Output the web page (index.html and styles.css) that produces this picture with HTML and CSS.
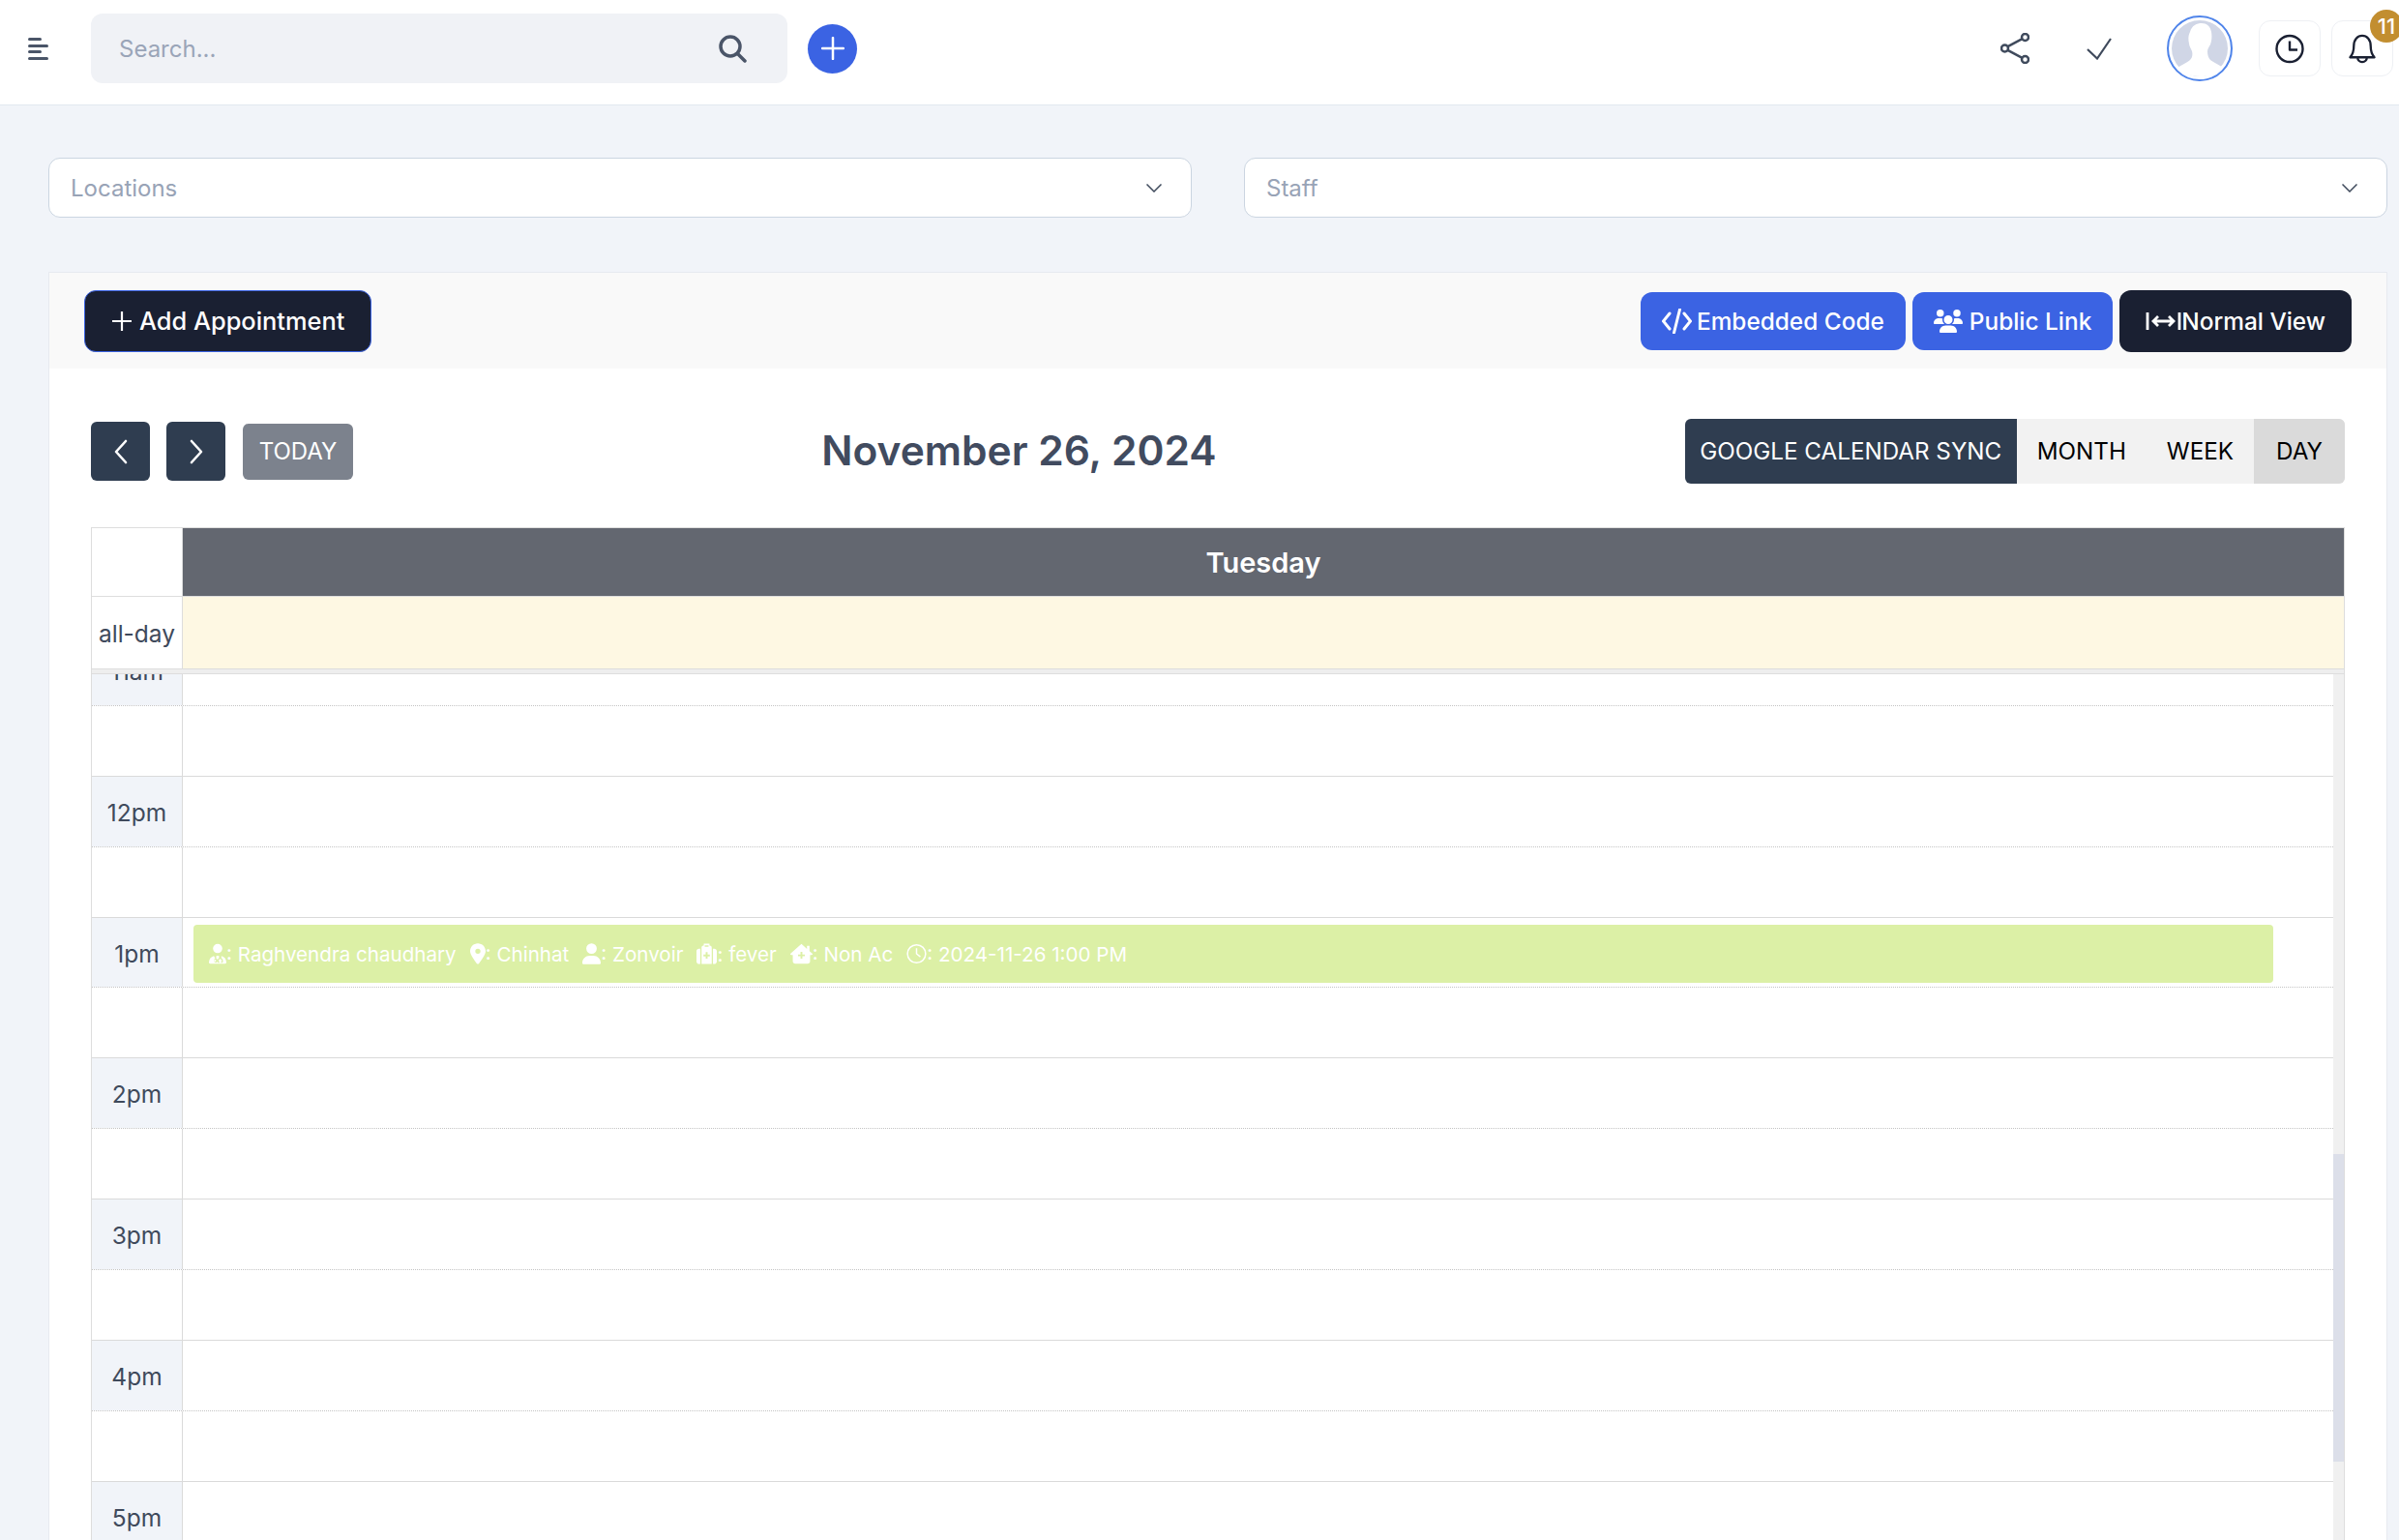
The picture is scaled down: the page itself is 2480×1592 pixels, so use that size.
FILE: index.html
```html
<!DOCTYPE html>
<html lang="en">
<head>
<meta charset="utf-8">
<title>Appointments</title>
<link rel="stylesheet" href="styles.css">
</head>
<body>
<div class="page">
  <header class="topbar">
    <svg class="menu-icon" viewBox="0 0 21 23"><path d="M1.5 1.5h11M1.5 8.5h18M1.5 14.5h11M1.5 21.5h18"/></svg>
    <div class="search">
      <span class="search-text">Search...</span>
      <svg class="search-icon" viewBox="0 0 29 29"><circle cx="12" cy="12" r="10"/><path d="M19.5 19.5l7.5 7.5"/></svg>
    </div>
    <button class="add-circle"><svg viewBox="0 0 24 24"><path d="M12 1v22M1 12h22"/></svg></button>
    <div class="top-right">
      <svg class="share-icon" viewBox="0 0 30 32"><circle cx="4.5" cy="16" r="3.5"/><circle cx="25.5" cy="4.5" r="3.5"/><circle cx="25.5" cy="27.5" r="3.5"/><path d="M7.5 14.2l15-8M7.5 17.8l15 8"/></svg>
      <svg class="check-icon" viewBox="0 0 26 23"><path d="M1 12l10 9.500L25 1"/></svg>
      <div class="avatar">
        <svg viewBox="0 0 58 58"><circle class="avatar-bg" cx="29" cy="29" r="29"/><path class="avatar-person" d="M19 12C21 5 26 3 31 3c5 0 9 3 10 9 1 6 0 10-1 13-1 2-3 4-3 7 0 4 1 7 3 9 4 3 9 5 13 8-6 6-15 9-24 9S11 54 6 49c4-3 10-5 13-8 2-2 3-5 2-9-1-3-3-5-3-8-1-4-1-8 1-12z"/></svg>
      </div>
      <div class="icon-box">
        <svg class="box-icon" viewBox="0 0 30 30"><circle cx="15" cy="15" r="13.500"/><path d="M15 7v9h8"/></svg>
      </div>
      <div class="icon-box">
        <svg class="box-icon" viewBox="0 0 30 32"><path d="M2 25c3-3 4-6 4-12C6 6 10 2 15 2s9 4 9 11c0 6 1 9 4 12zM10 25a5 5 0 0 0 10 0"/></svg>
        <span class="badge">11</span>
      </div>
    </div>
  </header>

  <main class="main">
    <div class="filters">
      <div class="select"><span>Locations</span><svg viewBox="0 0 16 9"><path d="M.5.5L8 8l7.500-7.500"/></svg></div>
      <div class="select"><span>Staff</span><svg viewBox="0 0 16 9"><path d="M.5.5L8 8l7.500-7.500"/></svg></div>
    </div>

    <section class="card">
      <div class="card-head">
        <button class="btn btn-add"><svg class="plus" viewBox="0 0 20 20"><path d="M10 0v20M0 10h20"/></svg>Add Appointment</button>
        <div class="card-actions">
          <button class="btn btn-embed"><svg class="code-icon" viewBox="0 0 31 26"><path d="M8 5L1.500 13 8 21M23 5l6.500 8-6.500 8M18.500 1l-6 24"/></svg>Embedded Code</button>
          <button class="btn btn-public"><svg class="users-icon" viewBox="0 0 640 512"><path d="M144 0a80 80 0 1 1 0 160A80 80 0 1 1 144 0zM512 0a80 80 0 1 1 0 160A80 80 0 1 1 512 0zM0 298.700C0 239.800 47.800 192 106.700 192h42.700c15.900 0 31 3.500 44.600 9.700c-1.300 7.200-1.900 14.700-1.900 22.300c0 38.200 16.800 72.500 43.300 96c-.2 0-.4 0-.7 0H21.300C9.600 320 0 310.400 0 298.700zM405.300 320c-.2 0-.4 0-.7 0c26.600-23.500 43.300-57.800 43.300-96c0-7.600-.7-15-1.900-22.300c13.600-6.300 28.700-9.700 44.600-9.700h42.700C592.200 192 640 239.800 640 298.700c0 11.800-9.600 21.300-21.300 21.300H405.300zM224 224a96 96 0 1 1 192 0 96 96 0 1 1 -192 0zM128 485.300C128 411.700 187.700 352 261.300 352H378.700C452.300 352 512 411.700 512 485.300c0 14.700-11.900 26.700-26.700 26.700H154.700c-14.700 0-26.700-11.900-26.700-26.700z"/></svg>Public Link</button>
          <button class="btn btn-normal"><svg class="width-icon" viewBox="0 0 37 20"><path d="M2 1v18M35 1v18M8 10h21M13 5l-5 5 5 5M24 5l5 5-5 5"/></svg>Normal View</button>
        </div>
      </div>

      <div class="card-body">
        <div class="toolbar">
          <div class="nav-group">
            <button class="nav-btn"><svg viewBox="0 0 14 26"><path d="M12 2L2 13l10 11"/></svg></button>
            <button class="nav-btn"><svg viewBox="0 0 14 26"><path d="M2 2l10 11L2 24"/></svg></button>
            <button class="today-btn">TODAY</button>
          </div>
          <h1 class="cal-title">November 26, 2024</h1>
          <div class="segments">
            <button class="seg seg-sync">GOOGLE CALENDAR SYNC</button>
            <button class="seg">MONTH</button>
            <button class="seg">WEEK</button>
            <button class="seg seg-active">DAY</button>
          </div>
        </div>

        <div class="calendar">
          <div class="cal-row cal-row-head">
            <div class="gutter"></div>
            <div class="day-name">Tuesday</div>
          </div>
          <div class="cal-row cal-row-allday">
            <div class="gutter allday-label">all-day</div>
            <div class="allday-cell"></div>
          </div>
          <div class="divider"></div>
          <div class="scroller">
            <div class="slots">
              <div class="slot hour"><div class="label">11am</div><div class="lane"></div></div>
              <div class="slot half"><div class="label blank"></div><div class="lane"></div></div>
              <div class="slot hour"><div class="label">12pm</div><div class="lane"></div></div>
              <div class="slot half"><div class="label blank"></div><div class="lane"></div></div>
              <div class="slot hour"><div class="label">1pm</div>
                <div class="lane">
                  <div class="event">
                    <span class="ev-item"><svg class="ev-icon ev-doctor" viewBox="0 0 448 512"><path d="M224 240A120 120 0 1 0 224 0a120 120 0 1 0 0 240zM128 312C50 330 0 395 0 482c0 16 13 30 30 30h388c17 0 30-14 30-30 0-87-50-152-128-170v54c22 8 40 30 40 62v40c0 9-7 16-16 16h-32v-32h16v-24c0-20-18-36-38-36s-38 16-38 36v24h16v32h-32c-9 0-16-7-16-16v-40c0-32 18-54 40-62v-56c-10-1-22-2-36-2s-26 1-36 2v68c24 8 40 30 40 54 0 28-24 52-52 52s-52-24-52-52c0-24 16-46 40-54zM132 434a24 24 0 1 0 0-1z"/></svg>: Raghvendra chaudhary</span>
                    <span class="ev-item"><svg class="ev-icon ev-pin" viewBox="0 0 384 512"><path d="M215.700 499.200C267 435 384 279.400 384 192C384 86 298 0 192 0S0 86 0 192c0 87.400 117 243 168.300 307.200c12.300 15.300 35.100 15.300 47.400 0zM192 128a64 64 0 1 1 0 128 64 64 0 1 1 0-128z"/></svg>: Chinhat</span>
                    <span class="ev-item"><svg class="ev-icon ev-user" viewBox="0 0 448 512"><path d="M224 256A128 128 0 1 0 224 0a128 128 0 1 0 0 256zm-45.700 48C79.800 304 0 383.800 0 482.300C0 498.700 13.300 512 29.700 512H418.300c16.400 0 29.700-13.300 29.700-29.700C448 383.800 368.200 304 269.700 304H178.300z"/></svg>: Zonvoir</span>
                    <span class="ev-item"><svg class="ev-icon ev-case" viewBox="0 0 512 512"><path fill-rule="evenodd" d="M176 48c-26 0-48 22-48 48v416h256V96c0-26-22-48-48-48h-8V0h-144v48zM208 40h96v40h-96zM232 216h48v56h56v48h-56v56h-48v-56h-56v-48h56zM96 128v384H64c-35 0-64-29-64-64V192c0-35 29-64 64-64zM416 128h32c35 0 64 29 64 64v256c0 35-29 64-64 64h-32z"/></svg>: fever</span>
                    <span class="ev-item"><svg class="ev-icon ev-house" viewBox="0 0 576 512"><path fill-rule="evenodd" d="M288 0L0 256c-4 20 10 34 32 32h32v160c0 35 29 64 64 64h320c35 0 64-29 64-64V288h32c22 2 36-12 32-32l-80-72V48h-64v80zM264 208h48v64h64v48h-64v64h-48v-64h-64v-48h64z"/></svg>: Non Ac</span>
                    <span class="ev-item"><svg class="ev-icon ev-clock" viewBox="0 0 24 24"><circle cx="12" cy="12" r="10.700"/><path d="M12 5.500V12l4.500 3.500"/></svg>: 2024-11-26 1:00 PM</span>
                  </div>
                </div>
              </div>
              <div class="slot half"><div class="label blank"></div><div class="lane"></div></div>
              <div class="slot hour"><div class="label">2pm</div><div class="lane"></div></div>
              <div class="slot half"><div class="label blank"></div><div class="lane"></div></div>
              <div class="slot hour"><div class="label">3pm</div><div class="lane"></div></div>
              <div class="slot half"><div class="label blank"></div><div class="lane"></div></div>
              <div class="slot hour"><div class="label">4pm</div><div class="lane"></div></div>
              <div class="slot half"><div class="label blank"></div><div class="lane"></div></div>
              <div class="slot hour"><div class="label">5pm</div><div class="lane"></div></div>
              <div class="slot half"><div class="label blank"></div><div class="lane"></div></div>
            </div>
            <div class="scrollbar"><div class="thumb"></div></div>
          </div>
        </div>
      </div>
    </section>
  </main>
</div>
</body>
</html>
```

FILE: styles.css
```css
* { box-sizing: border-box; }
html, body { margin: 0; height: 100%; overflow: hidden; }
body { font-family: Inter, "Liberation Sans", sans-serif; background: #f1f4f9; color: #3f4a5c; }
button { font: inherit; border: 0; padding: 0; cursor: pointer; }
svg { display: block; flex: none; }

.page { height: 100vh; display: flex; flex-direction: column; }

/* Top bar */
.topbar { height: 109px; flex: none; display: flex; align-items: center; padding: 0 6px 8px 29px; background: #fff; border-bottom: 1px solid #e2e8f0; }
.menu-icon { width: 21px; height: 23px; margin-right: 44px; fill: none; stroke: #4a5568; stroke-width: 3; stroke-linecap: round; }
.search { width: 720px; height: 72px; display: flex; align-items: center; justify-content: space-between; padding: 0 42px 0 29px; background: #f0f2f6; border-radius: 12px; }
.search-text { font-size: 24px; color: #9aa5b8; }
.search-icon { width: 29px; height: 29px; fill: none; stroke: #4a5568; stroke-width: 3.500; stroke-linecap: round; }
.add-circle { width: 51px; height: 51px; margin-left: 21px; border-radius: 50%; background: #3b63e3; display: flex; align-items: center; justify-content: center; }
.add-circle svg { width: 24px; height: 24px; fill: none; stroke: #fff; stroke-width: 2.500; stroke-linecap: round; }
.top-right { margin-left: auto; display: flex; align-items: center; }
.share-icon { width: 30px; height: 32px; margin-right: 59px; fill: none; stroke: #3f4a5c; stroke-width: 2.500; }
.check-icon { width: 26px; height: 23px; margin-right: 57px; fill: none; stroke: #3f4a5c; stroke-width: 2.200; }
.avatar { width: 68px; height: 68px; margin-right: 27px; padding: 3px; border: 2px solid #4f84ea; border-radius: 50%; background: #fff; overflow: hidden; }
.avatar svg { width: 100%; height: 100%; }
.avatar-bg { fill: #d0d6e6; }
.avatar-person { fill: #fff; }
.icon-box { position: relative; width: 64px; height: 58px; display: flex; align-items: center; justify-content: center; border: 1px solid #eef0f4; border-radius: 12px; background: #fff; }
.icon-box + .icon-box { margin-left: 11px; }
.box-icon { width: 30px; height: 31px; fill: none; stroke: #1a2032; stroke-width: 2.400; stroke-linejoin: round; }
.badge { position: absolute; top: -12px; right: -11px; width: 34px; height: 34px; border-radius: 50%; background: #c28e30; color: #fff; font-size: 22px; font-weight: 500; line-height: 34px; text-align: center; }

/* Main */
.main { flex: 1; min-height: 0; display: flex; flex-direction: column; padding: 54px 12px 0 50px; }
.filters { flex: none; display: grid; grid-template-columns: 1fr 1fr; gap: 54px; }
.select { height: 62px; display: flex; align-items: center; justify-content: space-between; padding: 0 30px 0 22px; background: #fff; border: 1px solid #cbd5e1; border-radius: 12px; font-size: 24px; color: #98a3b6; }
.select svg { width: 16px; height: 9px; fill: none; stroke: #3f4a5c; stroke-width: 1.500; }

/* Card */
.card { flex: 1; min-height: 0; margin-top: 56px; display: flex; flex-direction: column; background: #fff; border: 1px solid #e7eaf0; border-bottom: 0; }
.card-head { flex: none; height: 99px; display: flex; align-items: center; justify-content: space-between; padding: 0 36px; background: #f9f9f9; }
.card-actions { display: flex; align-items: center; gap: 7px; }
.btn { display: flex; align-items: center; color: #fff; font-size: 24.400px; font-weight: 500; border-radius: 12px; white-space: nowrap; }
.btn-add { width: 297px; height: 64px; padding-left: 28px; background: #1a2032; border: 1px solid #3b63e3; font-size: 25.400px; }
.plus { width: 20px; height: 20px; margin-right: 8px; fill: none; stroke: #fff; stroke-width: 2.200; }
.btn-embed { height: 60px; padding: 0 22px; background: #3b63e3; }
.btn-public { height: 60px; padding: 0 22px; background: #3b63e3; }
.btn-normal { height: 64px; padding: 0 27px; background: #1a2032; }
.code-icon { width: 31px; height: 26px; margin-right: 5px; fill: none; stroke: #fff; stroke-width: 3; stroke-linecap: round; }
.users-icon { width: 30px; height: 24px; margin-right: 7px; fill: #fff; }
.width-icon { width: 37px; height: 20px; fill: none; stroke: #fff; stroke-width: 2.800; }

.card-body { flex: 1; min-height: 0; display: flex; flex-direction: column; padding: 52px 43px 0; }
.toolbar { flex: none; height: 67px; display: flex; align-items: center; justify-content: space-between; }
.nav-group { display: flex; align-items: center; }
.nav-btn { width: 61px; height: 61px; margin-right: 17px; display: flex; align-items: center; justify-content: center; background: #2f3d50; border-radius: 6px; }
.nav-btn svg { width: 14px; height: 26px; fill: none; stroke: #fff; stroke-width: 2.600; stroke-linecap: round; stroke-linejoin: round; }
.today-btn { width: 114px; height: 58px; margin-left: 1px; background: #7c828d; color: #fff; border-radius: 6px; font-size: 24px; }
.cal-title { margin: 0 0 2px; font-size: 42.500px; font-weight: 600; color: #414b5f; }
.segments { display: flex; height: 67px; border-radius: 6px; overflow: hidden; background: #f2f2f2; }
.seg { background: transparent; color: #000; font-size: 24.200px; padding: 0 21px; }
.seg-sync { background: #2f3d50; color: #fff; padding: 0 15.500px; }
.seg-active { background: #dadada; padding: 0 23px; }

/* Calendar */
.calendar { flex: 1; min-height: 0; margin-top: 45px; display: flex; flex-direction: column; border: 1px solid #dddddd; border-bottom: 0; }
.cal-row { flex: none; display: grid; grid-template-columns: 94px 1fr; }
.cal-row-head { height: 71px; border-bottom: 1px solid #dddddd; }
.cal-row-allday { height: 75px; border-bottom: 1px solid #dddddd; }
.gutter { background: #fff; border-right: 1px solid #dddddd; }
.day-name { display: flex; align-items: center; justify-content: center; background: #636770; color: #fff; font-size: 29px; font-weight: 600; }
.allday-label { display: flex; align-items: center; justify-content: center; font-size: 24.500px; padding-top: 2px; }
.allday-cell { background: #fef8e3; }
.divider { flex: none; height: 5px; background: #eeeeee; border-bottom: 1px solid #dddddd; }
.scroller { position: relative; flex: 1; min-height: 0; overflow: hidden; padding-right: 11px; }
.slots { margin-top: -41px; }
.slot { height: 72.900px; display: grid; grid-template-columns: 94px 1fr; }
.hour { border-top: 1px solid #dadada; }
.half { border-top: 1px dotted #c4c4c4; }
.label { display: flex; align-items: center; justify-content: center; background: #f1f4f9; border-right: 1px solid #dadada; font-size: 24.500px; padding-top: 2px; }
.label.blank { background: #fff; }
.lane { position: relative; }
.event { position: absolute; top: 7px; left: 11px; right: 62px; height: 60px; display: flex; align-items: center; gap: 14px; padding: 1px 0 0 16px; background: #dcf0a6; border-radius: 4px; color: #fff; font-size: 20.600px; white-space: nowrap; }
.ev-item { display: flex; align-items: center; white-space: pre; }
.ev-icon { height: 22px; fill: #fff; }
.ev-doctor { width: 18px; }
.ev-pin { width: 16px; }
.ev-user { width: 19px; }
.ev-case { width: 21px; }
.ev-house { width: 23px; }
.ev-clock { width: 21px; height: 22px; fill: none; stroke: #fff; stroke-width: 1.700; }
.scrollbar { position: absolute; top: 0; right: 0; bottom: 0; width: 11px; background: #f0f0f0; }
.thumb { height: 318px; margin-top: 496px; background: #dcdfe9; }
```
